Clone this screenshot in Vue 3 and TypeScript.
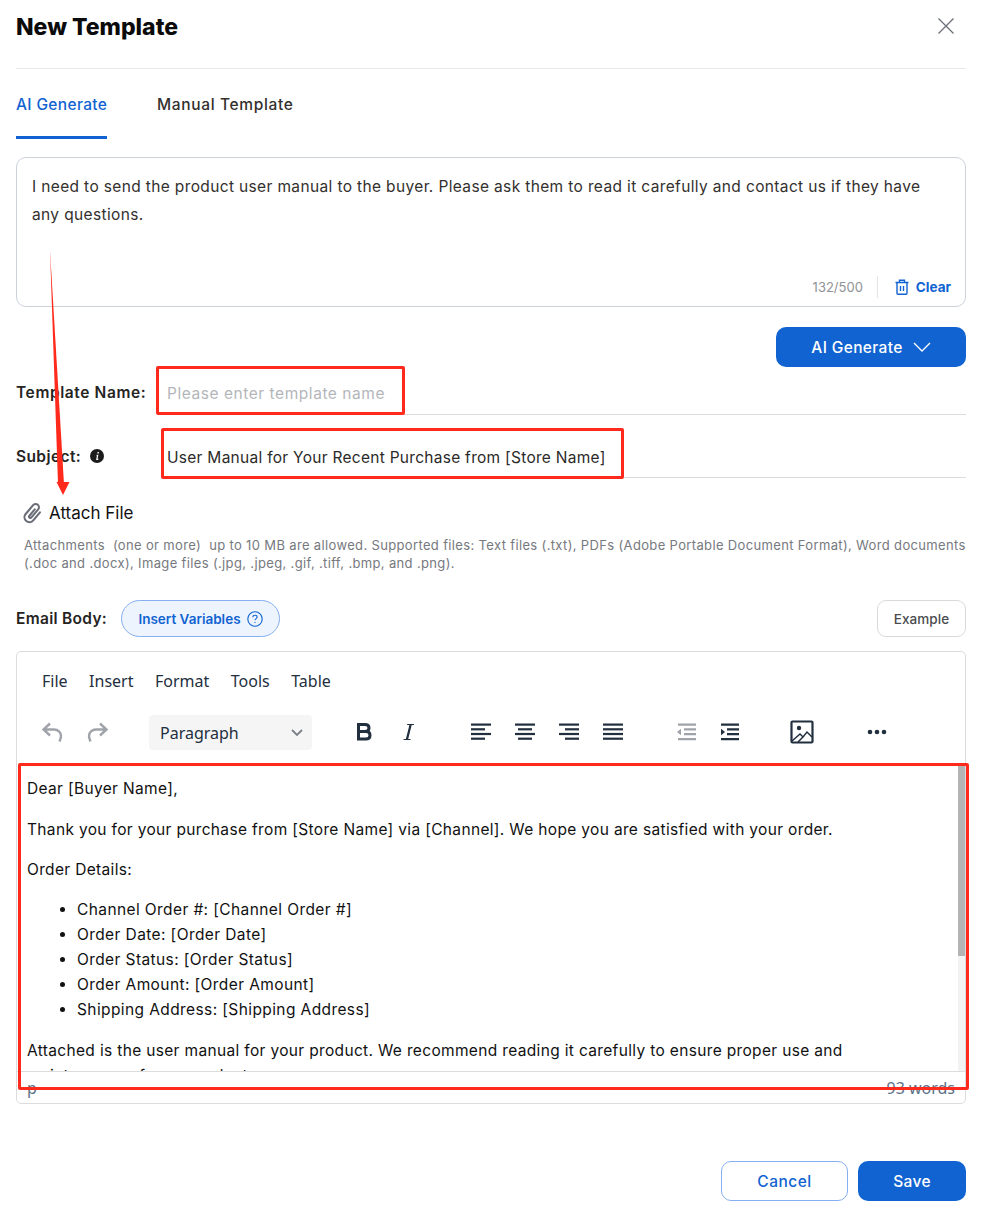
<template>
  <div class="dialog">
    <header class="head">
      <h1 class="title">New Template</h1>
      <button class="close" aria-label="Close">
        <svg width="18" height="18" viewBox="0 0 18 18"><path d="M1.5 1.5 16.5 16.5M16.5 1.5 1.5 16.5" stroke="#6b7078" stroke-width="1.3" fill="none" /></svg>
      </button>
    </header>

    <nav class="tabs">
      <span class="tab active">AI Generate</span>
      <span class="tab">Manual Template</span>
    </nav>

    <section class="prompt">
      <p class="prompt-text">I need to send the product user manual to the buyer. Please ask them to read it carefully and contact us if they have any questions.</p>
      <div class="prompt-foot">
        <span class="count">132/500</span>
        <span class="clear">
          <svg width="14" height="16" viewBox="0 0 14 16" fill="none" stroke="#1163d1" stroke-width="1.4"><path d="M0.5 3.500h13M4.500 3V1.200h5V3M2 4v10.200c0 .6.4 1 1 1h8c.6 0 1-.4 1-1V4M5.500 7v5M8.500 7v5" /></svg>
          Clear
        </span>
      </div>
    </section>

    <div class="generate-row">
      <button class="btn-primary generate">
        AI Generate
        <svg width="18" height="10" viewBox="0 0 18 10" fill="none" stroke="#fff" stroke-width="1.3"><path d="M1 1l8 8 8-8" /></svg>
      </button>
    </div>

    <div class="field name-field">
      <label class="label">Template Name:</label>
      <div class="field-input placeholder">Please enter template name</div>
    </div>
    <div class="field subject-field">
      <label class="label subject-label">
        Subject:
        <svg width="14" height="14" viewBox="0 0 14 14"><circle cx="7" cy="7" r="7" fill="#1c1c1c" /><path d="M7.600 3.100h1.400l-.2 1.400H7.300zM6.700 5.700h1.700l-.8 4.100h.8l-.2 1.100H6.100l.8-4.200h-.5z" fill="#fff" /></svg>
      </label>
      <div class="field-input">User Manual for Your Recent Purchase from [Store Name]</div>
    </div>

    <div class="attach">
      <svg width="22" height="22" viewBox="0 0 20 20" fill="none" stroke="#6a6e78" stroke-width="1.900" stroke-linecap="round"><path transform="rotate(40 10 10)" d="M14.500 5.500V15a4.500 4.500 0 0 1-9 0V4.500a3 3 0 0 1 6 0V14a1.200 1.200 0 0 1-2.400 0V6.500" /></svg>
      <span>Attach File</span>
    </div>
    <p class="hint">Attachments &nbsp;(one or more) &nbsp;up to 10 MB are allowed. Supported files: Text files (.txt), PDFs (Adobe Portable Document Format), Word documents (.doc and .docx), Image files (.jpg, .jpeg, .gif, .tiff, .bmp, and .png).</p>

    <div class="body-row">
      <span class="label">Email Body:</span>
      <button class="insert">
        Insert Variables
        <svg width="16" height="16" viewBox="0 0 16 16" fill="none" stroke="#1163d1" stroke-width="1.1"><circle cx="8" cy="8" r="7.200" /><path d="M5.900 6.200c0-1.200 1-1.900 2.100-1.900s2.100.7 2.100 1.800c0 1.500-2.100 1.500-2.100 3.100M8 11.100v1" /></svg>
      </button>
      <button class="example">Example</button>
    </div>

    <section class="editor">
      <div class="menubar">
        <span v-for="m in menus" :key="m">{{ m }}</span>
      </div>
      <div class="toolbar">
        <div class="tool-group history">
          <svg class="ico" viewBox="0 0 24 24" fill="none" stroke="#a0a4aa" stroke-width="2.400"><path d="M10 3.500 3.500 9.500 10 15.500M4 9.500h10c4 0 7 3 7 6.500 0 2-.8 3.500-1.500 5.500" /></svg>
          <svg class="ico" viewBox="0 0 24 24" fill="none" stroke="#a0a4aa" stroke-width="2.400"><path d="M14 3.500l6.500 6-6.500 6M20 9.500H10c-4 0-7 3-7 6.500 0 2 .8 3.500 1.500 5.500" /></svg>
        </div>
        <div class="select">
          <span>Paragraph</span>
          <svg width="12" height="8" viewBox="0 0 12 8" fill="none" stroke="#7b8087" stroke-width="1.800"><path d="M1 1l5 5 5-5" /></svg>
        </div>
        <div class="tool-group marks">
          <svg class="ico" viewBox="0 0 24 24" fill="none" stroke="#222f3e" stroke-width="3"><path d="M6.500 4.500h6.500c2.500 0 4 1.300 4 3.500s-1.500 3.500-4 3.500H6.500zM6.500 11.500h7.500c2.500 0 4 1.500 4 3.800s-1.500 3.700-4 3.700H6.500zM6.500 3v17" /></svg>
          <svg class="ico" viewBox="0 0 24 24" fill="#222f3e"><path d="M11.100 4h6.900v1.100h-2.300l-3.500 14h2.300V20H7.600v-.9h2.300l3.500-14h-2.300z" /></svg>
        </div>
        <div class="tool-group aligns">
          <svg v-for="a in aligns" :key="a.id" class="ico" viewBox="0 0 24 24" fill="#222f3e"><rect v-for="(r, i) in a.rows" :key="i" :x="r[0]" :y="3.500 + i * 4.700" :width="r[1]" height="2.200" /></svg>
        </div>
        <div class="tool-group indents">
          <svg class="ico" viewBox="0 0 24 24" fill="#a0a4aa"><path d="M3 12l4-3.200v6.400zM4 3.500h18v2.200H4zM10 8.300h12v2.200H10zM10 13.100h12v2.200H10zM4 18h18v2.200H4z" /></svg>
          <svg class="ico" viewBox="0 0 24 24" fill="#222f3e"><path d="M7 12 3 8.800v6.400zM3 3.500h18v2.200H3zM9 8.300h12v2.200H9zM9 13.100h12v2.200H9zM3 18h18v2.200H3z" /></svg>
        </div>
        <svg class="ico image" viewBox="0 0 24 24" fill="none" stroke="#222f3e" stroke-width="2.200"><rect x="1.500" y="1.500" width="21" height="21" rx="1" /><circle cx="9" cy="8" r="2.200" fill="#222f3e" stroke="none" /><path d="M2 21l8-7 3 3 4-5 5 5M8 22l6-6" stroke-width="1.500" /></svg>
        <svg class="ico more" viewBox="0 0 24 24" fill="#222f3e"><circle cx="5" cy="12" r="2.300" /><circle cx="12" cy="12" r="2.300" /><circle cx="19" cy="12" r="2.300" /></svg>
      </div>
      <div class="content">
        <div class="copy">
          <p>Dear [Buyer Name],</p>
          <p>Thank you for your purchase from [Store Name] via [Channel]. We hope you are satisfied with your order.</p>
          <p>Order Details:</p>
          <ul>
            <li v-for="d in details" :key="d">{{ d }}</li>
          </ul>
          <p>Attached is the user manual for your product. We recommend reading it carefully to ensure proper use and maintenance of your product.</p>
        </div>
        <div class="scrollbar"><div class="thumb"></div></div>
      </div>
      <div class="statusbar">
        <span class="path">p</span>
        <span class="words">93 words</span>
      </div>
    </section>

    <footer class="foot">
      <button class="cancel">Cancel</button>
      <button class="btn-primary save">Save</button>
    </footer>

    <!-- annotations drawn on top of the screenshot -->
    <div class="mark mark-name"></div>
    <div class="mark mark-subject"></div>
    <div class="mark mark-body"></div>
    <svg class="arrow" width="40" height="260" viewBox="0 0 40 260"><path d="M10 0 18 234 24 234 10 0z" fill="#ff2a1c" /><path d="M16.500 232 29.500 232 23 245z" fill="#ff2a1c" /></svg>
  </div>
</template>

<script setup lang="ts">
const menus = ['File', 'Insert', 'Format', 'Tools', 'Table']

const aligns = [
  { id: 'left', rows: [[2, 20], [2, 14], [2, 20], [2, 14]] },
  { id: 'center', rows: [[2, 20], [5, 14], [2, 20], [5, 14]] },
  { id: 'right', rows: [[2, 20], [8, 14], [2, 20], [8, 14]] },
  { id: 'justify', rows: [[2, 20], [2, 20], [2, 20], [2, 20]] },
]

const details = [
  'Channel Order #: [Channel Order #]',
  'Order Date: [Order Date]',
  'Order Status: [Order Status]',
  'Order Amount: [Order Amount]',
  'Shipping Address: [Shipping Address]',
]
</script>

<style>
html, body {
  background: #fff;
}
</style>

<style scoped>
.dialog {
  position: relative;
  width: 950px;
  height: 1219px;
  padding: 0 20px 0 16px;
  font-family: Inter, "Liberation Sans", sans-serif;
  color: #1d1d1f;
  overflow: hidden;
}

button {
  font-family: inherit;
  cursor: pointer;
}

.head {
  display: flex;
  justify-content: space-between;
  align-items: center;
  height: 69px;
  padding-bottom: 15px;
  box-sizing: border-box;
  border-bottom: 1px solid #e8e8ea;
}

.title {
  margin: 0;
  font-size: 23px;
  font-weight: 800;
  color: #0b0b0c;
}

.close {
  display: flex;
  padding: 0;
  margin: -2px 11px 0 0;
  background: none;
  border: 0;
}

.tabs {
  display: flex;
  gap: 50px;
  height: 71px;
}

.tab {
  height: 70px;
  box-sizing: border-box;
  padding-top: 26px;
  font-size: 15.500px;
  font-weight: 500;
  letter-spacing: 0.65px;
  color: #33302e;
  white-space: nowrap;
}

.tab.active {
  width: 91px;
  letter-spacing: 0.35px;
  color: #1163d1;
  border-bottom: 3px solid #1163d1;
}

.prompt {
  display: flex;
  flex-direction: column;
  justify-content: space-between;
  height: 150px;
  margin-top: 17px;
  padding: 15px 14px 8px 15px;
  box-sizing: border-box;
  border: 1px solid #ccd1dc;
  border-radius: 10px;
}

.prompt-text {
  max-width: 895px;
  margin: 0;
  font-size: 15.500px;
  line-height: 28px;
  letter-spacing: 0.36px;
  color: #33302e;
}

.prompt-foot {
  display: flex;
  justify-content: flex-end;
  align-items: center;
  font-size: 13px;
}

.count {
  padding-right: 14px;
  border-right: 1px solid #e4e5e8;
  line-height: 22px;
  color: #8f9296;
}

.clear {
  display: flex;
  align-items: center;
  gap: 7px;
  padding-left: 17px;
  font-size: 13.500px;
  font-weight: 700;
  color: #1163d1;
}

.generate-row {
  display: flex;
  justify-content: flex-end;
  margin-top: 20px;
}

.btn-primary {
  color: #fff;
  background: #1163d1;
  border: 0;
  border-radius: 10px;
  font-size: 15.500px;
  font-weight: 500;
  letter-spacing: 0.35px;
}

.generate {
  display: flex;
  justify-content: center;
  align-items: center;
  gap: 10px;
  width: 190px;
  height: 40px;
}

.field {
  display: flex;
  align-items: center;
  height: 48px;
}

.name-field {
  height: 49px;
  margin-top: -1px;
}

.subject-field {
  margin-top: 15px;
}

.label {
  font-size: 15.500px;
  font-weight: 600;
  letter-spacing: 0.4px;
  color: #26241f;
  white-space: nowrap;
}

.subject-label {
  display: flex;
  align-items: center;
  gap: 9px;
  width: 151px;
  margin-top: 4px;
}

.name-field .label {
  width: 151px;
  margin-top: 4px;
  letter-spacing: 0.6px;
}

.field-input {
  flex: 1;
  align-self: stretch;
  display: flex;
  align-items: center;
  padding-top: 8px;
  font-size: 15.500px;
  letter-spacing: 0.28px;
  color: #2c2a28;
  border-bottom: 1px solid #dcdcdc;
}

.placeholder {
  padding-top: 6px;
  letter-spacing: 0.55px;
  color: #b4b6ba;
}

.attach {
  display: flex;
  align-items: center;
  gap: 5px;
  margin: 24px 0 0 6px;
  font-size: 17px;
  color: #111;
}

.hint {
  margin: 12px -10px 0 8px;
  font-size: 13px;
  line-height: 18px;
  letter-spacing: 0.35px;
  color: #76797e;
}

.body-row {
  display: flex;
  align-items: center;
  margin-top: 28px;
  height: 37px;
}

.body-row .label {
  width: 91px;
  letter-spacing: 0.3px;
}

.insert {
  display: flex;
  justify-content: center;
  align-items: center;
  gap: 6px;
  width: 159px;
  height: 37px;
  margin-left: 14px;
  padding: 0;
  font-size: 13.500px;
  font-weight: 600;
  color: #1163d1;
  background: #edf4fe;
  border: 1px solid #87aef0;
  border-radius: 19px;
}

.example {
  width: 89px;
  height: 37px;
  margin-left: auto;
  font-size: 13.500px;
  font-weight: 500;
  letter-spacing: 0.1px;
  color: #4a4c50;
  background: #fff;
  border: 1px solid #d8dadd;
  border-radius: 9px;
}

.editor {
  display: flex;
  flex-direction: column;
  height: 453px;
  margin-top: 14px;
  box-sizing: border-box;
  border: 1px solid #dcdcdc;
  border-radius: 5px;
  overflow: hidden;
}

.menubar {
  display: flex;
  gap: 21.500px;
  height: 55px;
  padding: 18px 0 0 25px;
  box-sizing: border-box;
  font-family: "Noto Sans", sans-serif;
  font-size: 16px;
  color: #222f3e;
}

.toolbar {
  display: flex;
  align-items: center;
  height: 50px;
}

.ico {
  width: 24px;
  height: 24px;
  flex: none;
}

.tool-group {
  display: flex;
  flex: none;
}

.history {
  gap: 22px;
  margin-left: 23px;
}

.select {
  display: flex;
  justify-content: space-between;
  align-items: center;
  width: 163px;
  height: 35px;
  margin-left: 39px;
  padding: 2px 9px 0 11px;
  box-sizing: border-box;
  font-family: "Noto Sans", sans-serif;
  font-size: 16px;
  color: #222f3e;
  background: #f5f5f6;
  border-radius: 4px;
}

.marks {
  gap: 20px;
  margin-left: 40px;
}

.aligns {
  gap: 20px;
  margin-left: 49px;
}

.indents {
  gap: 20px;
  margin-left: 49px;
}

.image {
  margin-left: 48px;
}

.more {
  margin-left: 51px;
}

.content {
  position: relative;
  display: flex;
  flex: 1;
  min-height: 0;
  margin-top: 6px;
  overflow: hidden;
}

.copy {
  flex: 1;
  padding: 13px 60px 0 10px;
  font-size: 15.500px;
  line-height: 25px;
  letter-spacing: 0.34px;
  color: #111;
}

.copy p {
  margin: 0 0 15.500px;
}

.copy ul {
  margin: -1px 0 16.500px;
  padding-left: 50px;
  letter-spacing: 0.4px;
}

.scrollbar {
  width: 7px;
  background: #f3f3f3;
}

.thumb {
  height: 193px;
  background: #b4b4b4;
}

.statusbar {
  display: flex;
  justify-content: space-between;
  align-items: center;
  height: 32px;
  padding: 0 10px;
  box-sizing: border-box;
  font-family: "Noto Sans", sans-serif;
  font-size: 16px;
  color: #5b7186;
  border-top: 1px solid #dcdcdc;
}

.foot {
  display: flex;
  justify-content: flex-end;
  gap: 10px;
  margin-top: 57px;
}

.cancel {
  width: 127px;
  height: 40px;
  font-size: 15.500px;
  font-weight: 500;
  letter-spacing: 0.5px;
  color: #1163d1;
  background: #fff;
  border: 1px solid #87aef0;
  border-radius: 10px;
}

.save {
  width: 108px;
  height: 40px;
}

.mark {
  position: absolute;
  box-sizing: border-box;
  border: 3px solid #ff2a1c;
  border-radius: 2px;
}

.mark-name {
  left: 156px;
  top: 366px;
  width: 249px;
  height: 49px;
}

.mark-subject {
  left: 161px;
  top: 428px;
  width: 463px;
  height: 51px;
}

.mark-body {
  left: 18px;
  top: 763px;
  width: 951px;
  height: 327px;
}

.arrow {
  position: absolute;
  left: 40px;
  top: 250px;
}
</style>
